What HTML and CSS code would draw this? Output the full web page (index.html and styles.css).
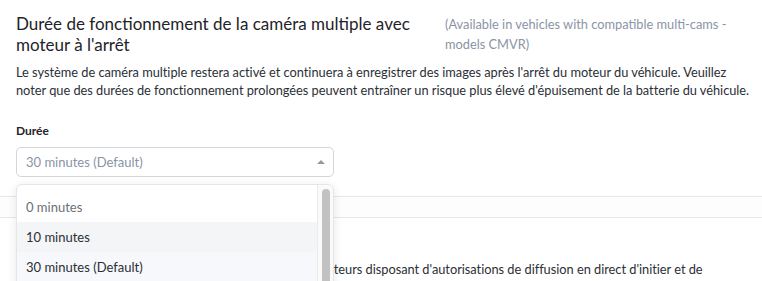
FILE: index.html
```html
<!DOCTYPE html>
<html lang="fr">
	<head>
		<meta charset="UTF-8" />
		<meta name="viewport" content="width=device-width, initial-scale=1.0" />
		<title>Paramètres caméra</title>
		<link rel="stylesheet" href="styles.css">
	</head>
	<body>
		<div class="section">
			<div class="section-head">
				<h2 class="section-title">Durée de fonctionnement de la caméra multiple avec moteur à l'arrêt</h2>
				<span class="section-note">(Available in vehicles with compatible multi-cams - models CMVR)</span>
			</div>
			<p class="section-desc">Le système de caméra multiple restera activé et continuera à enregistrer des images après l'arrêt du moteur du véhicule. Veuillez noter que des durées de fonctionnement prolongées peuvent entraîner un risque plus élevé d'épuisement de la batterie du véhicule.</p>
			<div class="field">
				<label class="field-label">Durée</label>
				<div class="select">
					<div class="select-control">
						<span class="select-value">30 minutes (Default)</span>
						<span class="select-arrow"></span>
					</div>
					<div class="select-menu">
						<div class="select-options">
							<div class="option option-muted">0 minutes</div>
							<div class="option option-hover">10 minutes</div>
							<div class="option option-selected">30 minutes (Default)</div>
							<div class="option">1 heure</div>
						</div>
						<div class="select-scroll">
							<div class="select-thumb"></div>
						</div>
					</div>
				</div>
			</div>
		</div>
		<div class="divider"></div>
		<div class="section section-next">
			<h2 class="section-title">Diffusion en direct</h2>
			<p class="section-desc">Permettre aux administrateurs de leur flotte et aux utilisateurs disposant d'autorisations de diffusion en direct d'initier et de visionner des flux vidéo en direct.</p>
		</div>
	</body>
</html>
```

FILE: styles.css
```css
* {
	margin: 0;
	padding: 0;
	box-sizing: border-box;
}

html,
body {
	overflow: hidden;
}

body {
	font-family: "Lato", "Liberation Sans", sans-serif;
	background-color: #ffffff;
	color: #2b2f36;
	width: 762px;
}

.section {
	padding: 13px 4px 19px 16px;
	border-bottom: 1px solid #e6e8ee;
}

.section-next {
	border-top: 1px solid #e8e8ea;
	border-bottom: none;
	padding-right: 40px;
}

.divider {
	height: 20px;
	background-color: #fdfdfd;
}

.section-head {
	display: flex;
	gap: 24px;
	align-items: flex-start;
}

.section-title {
	font-size: 17px;
	font-weight: 400;
	line-height: 21px;
	color: #1f2329;
	flex: 0 0 405px;
}

.section-note {
	font-size: 12.8px;
	line-height: 20px;
	color: #8a94a6;
	padding-top: 1px;
}

.section-desc {
	margin-top: 8px;
	font-size: 12.8px;
	letter-spacing: -0.02px;
	line-height: 18px;
	color: #2b2f36;
}

.field {
	margin-top: 24px;
}

.field-label {
	display: block;
	font-size: 12px;
	font-weight: 700;
	line-height: 16px;
	color: #1f2329;
	margin-bottom: 8px;
}

.select {
	position: relative;
	width: 318px;
}

.select-control {
	height: 30px;
	border: 1px solid #d3d6dc;
	border-radius: 5px;
	padding: 0 9px;
	display: flex;
	align-items: center;
	justify-content: space-between;
}

.select-value {
	font-size: 13px;
	color: #8a94a6;
}

.select-arrow {
	width: 0;
	height: 0;
	border-left: 4px solid transparent;
	border-right: 4px solid transparent;
	border-bottom: 4px solid #9a9a9a;
	margin-right: -1px;
}

.select-menu {
	position: absolute;
	top: calc(100% + 7px);
	left: 0;
	right: 0;
	height: 140px;
	background-color: #ffffff;
	border: 1px solid #e4e6ea;
	border-radius: 6px;
	box-shadow: 0 2px 10px rgba(0, 0, 0, 0.1);
	display: flex;
	overflow: hidden;
	z-index: 10;
}

.select-options {
	flex: 1;
	padding-top: 7px;
}

.option {
	height: 30px;
	line-height: 30px;
	padding-left: 9px;
	font-size: 13px;
	color: #2b2f36;
}

.option-muted {
	color: #6b6f76;
}

.option-hover {
	background-color: #f4f5f7;
}

.option-selected {
	background-color: #f7f8fc;
}

.select-scroll {
	width: 16px;
	border-left: 1px solid #ececec;
	background-color: #fafafa;
	padding: 4px 3px 0 4px;
}

.select-thumb {
	height: 110px;
	background-color: #c2c2c2;
	border-radius: 5px;
}
```
